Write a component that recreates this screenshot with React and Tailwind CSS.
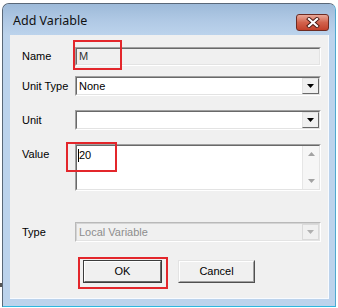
import React from "react";

const font = { fontFamily: '"Liberation Sans", Arial, sans-serif' };

function Arrow({ color = "#000", up = false }) {
  return (
    <svg width="7" height="4" viewBox="0 0 7 4" className="block">
      {up ? (
        <path d="M0 4 L7 4 L3.5 0 Z" fill={color} />
      ) : (
        <path d="M0 0 L7 0 L3.5 4 Z" fill={color} />
      )}
    </svg>
  );
}

function Sunken({ children, className = "", bg = "bg-white", light = false }) {
  return (
    <div
      className={`border ${
        light
          ? "border-t-[#b9b9b9] border-l-[#b9b9b9]"
          : "border-t-[#a0a0a0] border-l-[#a0a0a0]"
      } border-b-white border-r-white ${className}`}
    >
      <div
        className={`h-full w-full border ${
          light
            ? "border-t-[#d4d4d4] border-l-[#d4d4d4]"
            : "border-t-[#696969] border-l-[#696969]"
        } border-b-[#e3e3e3] border-r-[#e3e3e3] ${bg} flex`}
      >
        {children}
      </div>
    </div>
  );
}

function DropBtn({ disabled = false }) {
  return (
    <div className="w-[17px] h-full border border-t-[#e3e3e3] border-l-[#e3e3e3] border-b-[#696969] border-r-[#696969] bg-[#f0f0f0] flex items-center justify-center">
      <Arrow color={disabled ? "#a0a0a0" : "#000"} />
    </div>
  );
}

function Label({ children, top = false }) {
  return (
    <div
      className={`w-[53px] shrink-0 text-[11px] text-black leading-none ${
        top ? "pt-[5px]" : "self-center"
      }`}
    >
      {children}
    </div>
  );
}

export default function App() {
  return (
    <div className="w-[338px] h-[308px] bg-white relative overflow-hidden" style={font}>
      <div className="absolute left-0 top-[283px] w-[2px] h-[4px] bg-[#555]" />
      <div className="ml-[2px] mt-[3px] w-[334px] h-[304px] rounded-t-[7px] border border-[#5a6878] border-b-[#2fb7df] border-r-[#4fa9d0] bg-[#bcd3ec] flex flex-col">
        {/* Title bar */}
        <div className="h-[31px] rounded-t-[6px] bg-gradient-to-b from-[#9dbad9] via-[#afc8e4] to-[#bcd3ec] flex items-start">
          <div
            className="ml-[10px] mt-[11px] text-[12.5px] text-[#111] leading-none"
            style={{ fontFamily: '"Noto Sans", "Open Sans", sans-serif' }}
          >
            Add Variable
          </div>
          <div className="ml-auto mr-[6px] mt-[10px] w-[33px] h-[17px] rounded-[3px] border border-[#6e2b22] bg-gradient-to-b from-[#e8a899] via-[#d2624c] to-[#c2402a] flex items-center justify-center">
            <svg width="14" height="11" viewBox="0 0 14 11">
              <path d="M3 2 L11 9 M11 2 L3 9" stroke="#4a1a14" strokeWidth="4" strokeLinecap="square" />
              <path d="M3 2 L11 9 M11 2 L3 9" stroke="#fff" strokeWidth="2.2" strokeLinecap="square" />
            </svg>
          </div>
        </div>
        {/* Client */}
        <div className="ml-[7px] mr-[6px] w-[319px] h-[264px] bg-[#f0f0f0] border-r border-b border-[#f8fbff] flex flex-col pl-[12px]">
          {/* Name */}
          <div className="mt-[12px] h-[19px] flex">
            <Label>Name</Label>
            <Sunken className="w-[246px] h-full" bg="bg-[#f0f0f0]">
              <span className="self-center pl-[2px] text-[11px] text-[#333] leading-none">M</span>
            </Sunken>
          </div>
          {/* Unit Type */}
          <div className="mt-[10px] h-[20px] flex">
            <Label>Unit Type</Label>
            <Sunken className="w-[246px] h-full">
              <span className="self-center pl-[2px] text-[11px] text-black leading-none flex-1">None</span>
              <DropBtn />
            </Sunken>
          </div>
          {/* Unit */}
          <div className="mt-[14px] h-[20px] flex">
            <Label>Unit</Label>
            <Sunken className="w-[246px] h-full">
              <span className="flex-1" />
              <DropBtn />
            </Sunken>
          </div>
          {/* Value */}
          <div className="mt-[14px] h-[47px] flex">
            <Label top>Value</Label>
            <Sunken className="w-[246px] h-full">
              <div className="flex-1 flex items-start pt-[3px] pl-[1px]">
                <div className="w-px h-[13px] bg-black" />
                <span className="text-[11px] text-black leading-[13px]">20</span>
              </div>
              <div className="w-[17px] h-full bg-[#f6f6f6] border-l border-[#e6e6e6] flex flex-col items-center justify-between py-[6px]">
                <Arrow color="#a3a3a3" up />
                <Arrow color="#a3a3a3" />
              </div>
            </Sunken>
          </div>
          {/* Type */}
          <div className="mt-[31px] h-[20px] flex">
            <Label>Type</Label>
            <Sunken className="w-[246px] h-full" bg="bg-[#f0f0f0]" light>
              <span className="self-center pl-[2px] text-[11px] text-[#8d8d8d] leading-none flex-1">
                Local Variable
              </span>
              <div className="w-[17px] h-full border border-[#dadada] bg-[#f0f0f0] flex items-center justify-center">
                <Arrow color="#b0b0b0" />
              </div>
            </Sunken>
          </div>
          {/* Buttons */}
          <div className="mt-[18px] h-[23px] flex pl-[61px] gap-[16px]">
            <div className="w-[79px] h-full border border-[#3c3c3c] flex">
              <div className="flex-1 border border-t-white border-l-white border-b-[#696969] border-r-[#696969] bg-[#f0f0f0] flex items-center justify-center text-[11px] text-black leading-none">
                OK
              </div>
            </div>
            <div className="w-[77px] h-full border border-t-[#e3e3e3] border-l-[#e3e3e3] border-b-[#505050] border-r-[#505050] flex">
              <div className="flex-1 border border-t-white border-l-white border-b-[#a0a0a0] border-r-[#a0a0a0] bg-[#f0f0f0] flex items-center justify-center text-[11px] text-black leading-none">
                Cancel
              </div>
            </div>
          </div>
        </div>
      </div>
      {/* red annotation boxes */}
      <div className="absolute left-[73px] top-[40px] w-[49px] h-[30px] border-2 border-[#e3262b]" />
      <div className="absolute left-[66px] top-[142px] w-[51px] h-[30px] border-2 border-[#e3262b]" />
      <div className="absolute left-[78px] top-[257px] w-[90px] h-[32px] border-2 border-[#e3262b]" />
    </div>
  );
}
